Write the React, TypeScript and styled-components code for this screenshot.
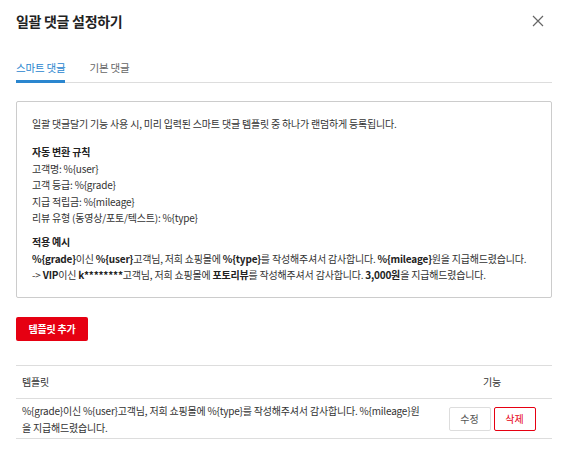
import React from "react";
import styled, { createGlobalStyle } from "styled-components";

const GlobalStyle = createGlobalStyle`
  html, body { margin: 0; padding: 0; background: #fff; }
  body { font-family: "Noto Sans CJK KR", "Noto Sans", sans-serif; color: #333; }
  * { box-sizing: border-box; }
`;

const Modal = styled.div`
  width: 565px;
  padding: 0 13px 0 16px;
  background: #fff;
`;

const Header = styled.div`
  display: flex;
  align-items: center;
  justify-content: space-between;
  height: 42px;
`;

const Title = styled.h1`
  margin: 0;
  font-size: 14px;
  font-weight: 700;
  color: #222;
  letter-spacing: -0.3px;
`;

const CloseButton = styled.button`
  border: 0;
  background: none;
  padding: 0;
  width: 14px;
  height: 14px;
  margin-right: 7px;
  display: flex;
  align-items: center;
  justify-content: center;
  cursor: pointer;
`;

const Tabs = styled.div`
  display: flex;
  gap: 24px;
  margin-top: 18px;
  border-bottom: 1px solid #ddd;
`;

const Tab = styled.div<{ $active?: boolean }>`
  font-size: 10.5px;
  line-height: 16px;
  letter-spacing: -0.2px;
  padding: 0 0 4px;
  margin-bottom: -1px;
  color: ${(p) => (p.$active ? "#2a86cf" : "#666")};
  border-bottom: 3px solid ${(p) => (p.$active ? "#2a86cf" : "transparent")};
`;

const InfoBox = styled.div`
  margin-top: 18px;
  border: 1px solid #ccc;
  border-radius: 2px;
  padding: 14px 15px 13px;
  font-size: 10px;
  line-height: 16.5px;
  letter-spacing: -0.2px;
  color: #333;
`;

const Para = styled.p`
  margin: 0;
`;

const SectionTitle = styled.h3<{ $gap: number }>`
  margin: ${(p) => p.$gap}px 0 0;
  font-size: 10px;
  font-weight: 700;
  color: #222;
  line-height: 18px;
`;

const Strong = styled.b`
  font-weight: 700;
  color: #222;
`;

const AddButton = styled.button`
  display: block;
  margin-top: 19px;
  height: 24px;
  width: 72px;
  padding: 0;
  border: 0;
  border-radius: 2px;
  background: #e60012;
  color: #fff;
  font-family: inherit;
  font-size: 10px;
  font-weight: 700;
  letter-spacing: -0.2px;
`;

const Table = styled.table`
  margin-top: 24px;
  width: 100%;
  border-collapse: collapse;
  font-size: 10px;
  letter-spacing: -0.2px;
  color: #333;
`;

const Th = styled.th<{ $center?: boolean }>`
  font-weight: 400;
  text-align: ${(p) => (p.$center ? "center" : "left")};
  padding: 0 6px;
  height: 33px;
  border-top: 1px solid #ddd;
  border-bottom: 1px solid #ddd;
`;

const Td = styled.td<{ $center?: boolean }>`
  text-align: ${(p) => (p.$center ? "center" : "left")};
  padding: 3px 6px 2px;
  height: 38px;
  line-height: 17px;
  border-bottom: 1px solid #ddd;
  vertical-align: middle;
`;

const Actions = styled.div`
  display: flex;
  gap: 3px;
  justify-content: center;
`;

const SmallButton = styled.button<{ $danger?: boolean }>`
  width: 42px;
  height: 24px;
  padding: 0;
  border-radius: 2px;
  background: #fff;
  border: 1px solid ${(p) => (p.$danger ? "#e60012" : "#ddd")};
  color: ${(p) => (p.$danger ? "#e60012" : "#555")};
  font-family: inherit;
  font-size: 10px;
`;

export default function App() {
  return (
    <>
      <GlobalStyle />
      <Modal>
        <Header>
          <Title>일괄 댓글 설정하기</Title>
          <CloseButton aria-label="닫기">
            <svg width="12" height="12" viewBox="0 0 12 12">
              <path d="M1 1L11 11M11 1L1 11" stroke="#666" strokeWidth="1.2" />
            </svg>
          </CloseButton>
        </Header>
        <Tabs>
          <Tab $active>스마트 댓글</Tab>
          <Tab>기본 댓글</Tab>
        </Tabs>
        <InfoBox>
          <Para>일괄 댓글달기 기능 사용 시, 미리 입력된 스마트 댓글 템플릿 중 하나가 랜덤하게 등록됩니다.</Para>
          <SectionTitle $gap={10}>자동 변환 규칙</SectionTitle>
          <Para>고객명: %{"{user}"}</Para>
          <Para>고객 등급: %{"{grade}"}</Para>
          <Para>지급 적립금: %{"{mileage}"}</Para>
          <Para>리뷰 유형 (동영상/포토/텍스트): %{"{type}"}</Para>
          <SectionTitle $gap={6}>적용 예시</SectionTitle>
          <Para>
            <Strong>%{"{grade}"}</Strong>이신 <Strong>%{"{user}"}</Strong>고객님, 저희 쇼핑몰에{" "}
            <Strong>%{"{type}"}</Strong>를 작성해주셔서 감사합니다. <Strong>%{"{mileage}"}</Strong>원을 지급해드렸습니다.
          </Para>
          <Para>
            -&gt; <Strong>VIP</Strong>이신 <Strong>k********</Strong>고객님, 저희 쇼핑몰에 <Strong>포토리뷰</Strong>를
            작성해주셔서 감사합니다. <Strong>3,000원</Strong>을 지급해드렸습니다.
          </Para>
        </InfoBox>
        <AddButton>템플릿 추가</AddButton>
        <Table>
          <colgroup>
            <col />
            <col style={{ width: 120 }} />
          </colgroup>
          <thead>
            <tr>
              <Th>템플릿</Th>
              <Th $center>기능</Th>
            </tr>
          </thead>
          <tbody>
            <tr>
              <Td>
                %{"{grade}"}이신 %{"{user}"}고객님, 저희 쇼핑몰에 %{"{type}"}를 작성해주셔서 감사합니다. %{"{mileage}"}원을 지급해드렸습니다.
              </Td>
              <Td $center>
                <Actions>
                  <SmallButton>수정</SmallButton>
                  <SmallButton $danger>삭제</SmallButton>
                </Actions>
              </Td>
            </tr>
          </tbody>
        </Table>
      </Modal>
    </>
  );
}
